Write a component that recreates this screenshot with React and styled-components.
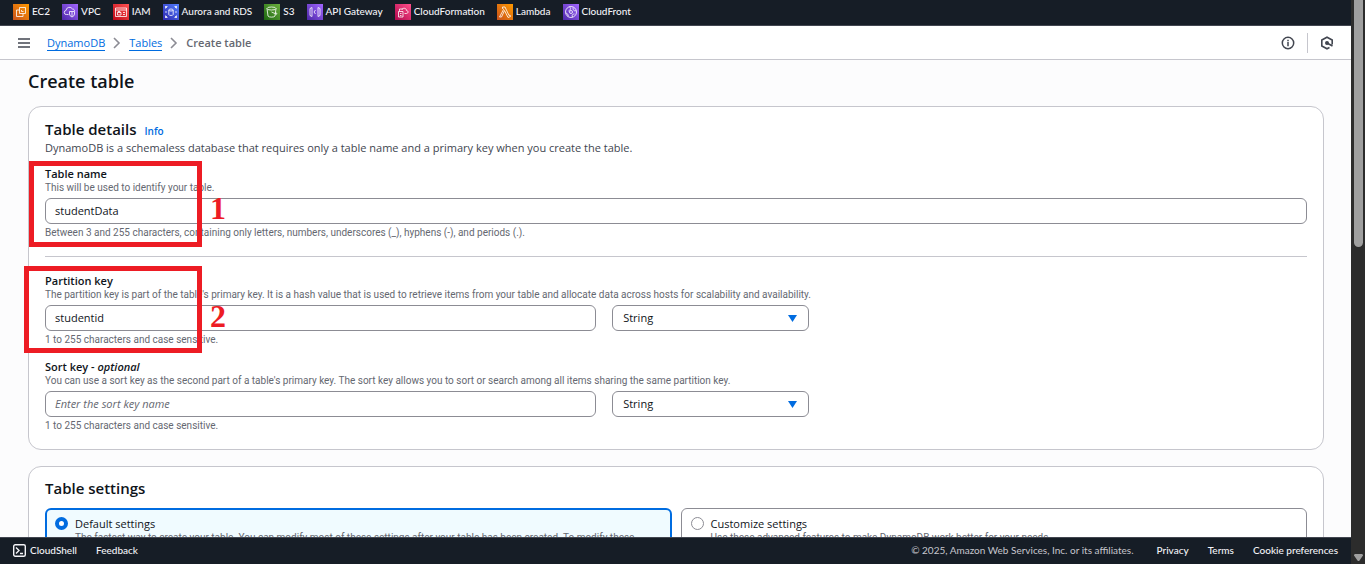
import React, { useState } from "react";
import styled, { createGlobalStyle, css } from "styled-components";

const Global = createGlobalStyle`
  *, *::before, *::after { box-sizing: border-box; }
  html, body, #root { height: 100%; }
  body {
    margin: 0;
    color: #0f141a;
    background: #fcfcfd;
    font: 11px/16px "Open Sans", "Noto Sans", sans-serif;
    overflow: hidden;
  }
  h1, h2, p { margin: 0; }
  button, input, select { font: inherit; color: inherit; }
`;

const Window = styled.div`
  display: grid;
  grid-template-columns: minmax(0, 1fr) 14px;
  height: 100%;
`;

const Shell = styled.div`
  display: flex;
  flex-direction: column;
  min-height: 0;
  height: 100vh;
`;

const Favorites = styled.nav`
  flex: none;
  display: flex;
  align-items: flex-start;
  height: 26px;
  padding: 4px 13px 0;
  gap: 12px;
  background: #161d26;
  border-bottom: 1px solid #424650;
  overflow: hidden;
`;

const Service = styled.a`
  display: flex;
  align-items: flex-start;
  gap: 3px;
  color: #f3f3f7;
  font: 500 10px/14px Lato, sans-serif;
  white-space: nowrap;
  text-decoration: none;
`;

const Tile = styled.svg`
  flex: none;
  width: 16px;
  height: 16px;
  fill: none;
  stroke: #fff;
  stroke-width: 1;
  stroke-opacity: 0.8;
  background: linear-gradient(45deg, ${(p) => p.$from}, ${(p) => p.$to});
`;

const NavBar = styled.header`
  flex: none;
  display: flex;
  align-items: center;
  height: 34px;
  padding: 0 16px;
  background: #fff;
  border-bottom: 1px solid #c6c6cd;
`;

const IconButton = styled.button`
  display: grid;
  place-items: center;
  width: 16px;
  height: 24px;
  padding: 0;
  border: 0;
  background: none;
  color: #424650;
  cursor: pointer;
`;

const Crumbs = styled.ol`
  display: flex;
  align-items: center;
  flex: 1;
  gap: 8px;
  margin: 0;
  padding: 0 0 0 15px;
  list-style: none;
  font-size: 11px;
`;

const Crumb = styled.li`
  display: flex;
  align-items: center;
  gap: 8px;
  color: #656871;
  font-weight: ${(p) => (p.$current ? 600 : 400)};
`;

const CrumbLink = styled.a`
  color: #006ce0;
  text-decoration: none;
  line-height: 15px;
  border-bottom: 1px solid #006ce0;
`;

const Tools = styled.div`
  display: flex;
  align-items: center;
  gap: 11px;
`;

const ToolDivider = styled.span`
  width: 1px;
  height: 20px;
  background: #c6c6cd;
`;

const Main = styled.main`
  flex: 1;
  min-height: 0;
  overflow: hidden;
  display: flex;
  flex-direction: column;
  gap: 16px;
  padding: 9px 27px 0 28px;
`;

const PageTitle = styled.h1`
  font-size: 18px;
  line-height: 24px;
  font-weight: 600;
  margin-bottom: -3px;
`;

const Card = styled.section`
  position: relative;
  flex: none;
  padding: 12px 16px 16px;
  background: #fff;
  border: 1px solid #c6c6cd;
  border-radius: 13px;
`;

const CardHead = styled.div`
  display: flex;
  align-items: baseline;
  gap: 8px;
`;

const CardTitle = styled.h2`
  font-size: 15px;
  line-height: 20px;
  font-weight: 600;
`;

const InfoLink = styled.a`
  color: #006ce0;
  font-size: 10px;
  font-weight: 600;
  text-decoration: none;
`;

const Description = styled.p`
  color: #424650;
  font-size: 11px;
  line-height: 18px;
`;

const Field = styled.div`
  margin-top: ${(p) => p.$space}px;
`;

const Label = styled.label`
  display: block;
  font-size: 11px;
  line-height: 14px;
  font-weight: 600;
`;

const Hint = styled.p`
  color: #656871;
  font: 400 10px/14px Roboto, sans-serif;
`;

const Controls = styled.div`
  display: grid;
  grid-template-columns: ${(p) => (p.$pair ? "minmax(0, 14fr) minmax(0, 5fr)" : "minmax(0, 1fr)")};
  gap: 16px;
  max-width: ${(p) => (p.$pair ? "764px" : "none")};
  margin: 3px 0 2px;
`;

const control = css`
  width: 100%;
  height: 26px;
  padding: 0 9px;
  border: 1px solid #8c8c94;
  border-radius: 6px;
  background: #fff;
  font-size: 11px;
`;

const TextInput = styled.input`
  ${control}
  padding-bottom: 2px;
  &::placeholder {
    color: #656871;
    font-style: italic;
    opacity: 1;
  }
`;

const SelectBox = styled.div`
  display: grid;
  align-items: center;
  & > * { grid-area: 1 / 1; }
`;

const Select = styled.select`
  ${control}
  padding: 0 10px;
  appearance: none;
`;

const Caret = styled.svg`
  justify-self: end;
  width: 9px;
  height: 7px;
  margin-right: 12px;
  fill: #006ce0;
  pointer-events: none;
`;

const Rule = styled.hr`
  height: 1px;
  margin: 16px 0 0;
  border: 0;
  background: #c6c6cd;
`;

const Choices = styled.div`
  display: grid;
  grid-template-columns: 1fr 1fr;
  gap: 9px;
  margin-top: 10px;
`;

const Choice = styled.label`
  display: grid;
  grid-template-columns: 13px 1fr;
  column-gap: 7px;
  align-items: start;
  min-height: 72px;
  padding: ${(p) => (p.$selected ? "7px 8px" : "8px 9px")};
  border: ${(p) => (p.$selected ? "2px solid #006ce0" : "1px solid #8c8c94")};
  border-radius: 6px;
  background: ${(p) => (p.$selected ? "#f0fbff" : "#fff")};
`;

const Radio = styled.input`
  appearance: none;
  width: 13px;
  height: 13px;
  margin: 0;
  border: 1px solid #8c8c94;
  border-radius: 50%;
  background: #fff;
  &:checked { border: 4px solid #006ce0; }
`;

const ChoiceText = styled.span`
  font-size: 11px;
  line-height: 14px;
`;

const ChoiceNote = styled.span`
  display: block;
  color: #656871;
  font: 400 10px/14px Roboto, sans-serif;
`;

const SettingsCard = styled(Card)`
  padding-top: 11px;
`;

const Footer = styled.footer`
  flex: none;
  display: flex;
  align-items: center;
  height: 27px;
  padding: 0 13px 2px;
  gap: 19px;
  background: #161d26;
  border-top: 1px solid #424650;
  color: #c6c6cd;
  font: 400 10px/14px Lato, sans-serif;
  white-space: nowrap;
`;

const FooterButton = styled.button`
  display: flex;
  align-items: center;
  gap: 4px;
  padding: 0;
  border: 0;
  background: none;
  color: #f3f3f7;
  font-weight: 500;
`;

const FooterLink = styled.a`
  color: #f3f3f7;
  font-weight: 500;
  text-decoration: none;
`;

const Copyright = styled.span`
  margin-left: auto;
  margin-right: 4px;
`;

const ScrollTrack = styled.div`
  display: flex;
  flex-direction: column;
  justify-content: space-between;
  align-items: center;
  height: 100vh;
  padding-bottom: 3px;
  background: #2c2c2c;
`;

const ScrollThumb = styled.div`
  width: 9px;
  height: 44%;
  border-radius: 0 0 5px 5px;
  background: #9f9f9f;
`;

const Mark = styled.div`
  position: absolute;
  top: ${(p) => p.$top}px;
  left: ${(p) => p.$left}px;
  width: ${(p) => p.$width}px;
  height: ${(p) => p.$height}px;
  border: 5px solid #ed1c24;
  pointer-events: none;
`;

const MarkNumber = styled.span`
  position: absolute;
  bottom: ${(p) => p.$bottom}px;
  left: 100%;
  margin-left: 13px;
  color: #ed1c24;
  font: 700 32px/36px "Liberation Serif", serif;
`;

const services = [
  ["EC2", "#c8511b", "#f90", <><path d="M6.500 3.500h6v6h-6z" /><path d="M6.500 6h-3v6.500h6.500v-3M8.500 6v1.500h2" /></>],
  ["VPC", "#4d27a8", "#a166ff", <><path d="M6.500 10.500H4.500a2 2 0 0 1-.5-4 3.500 3.500 0 0 1 6.500-1.500c1.500 0 2 1 2 2M7.500 7.500h5v2.500q0 2-2.500 3-2.500-1-2.500-3zM10 8v4.500" /></>],
  ["IAM", "#bd0816", "#ff5252", <><path d="M2.500 4h11v8.500h-11zM2.500 6h11M4.500 8.500h3.500v2.500H4.500zM5 8.500v-1h2v1M10 8.500h2M10 10.500h2" /></>],
  ["Aurora and RDS", "#2e27ad", "#527fff", <><ellipse cx="8" cy="6" rx="2.200" ry="1" /><path d="M5.800 6v4.500c0 1.300 4.400 1.300 4.400 0V6M2.500 4.500v-2h2M2.500 2.500l1.500 1.500M11.500 2.500h2v2M13.500 2.500 12 4M2.500 11.500v2h2M2.500 13.500 4 12M11.500 13.500h2v-2M13.500 13.500 12 12M3 7v2M13 7v2" /></>],
  ["S3", "#1b660f", "#6cae3e", <><ellipse cx="7.500" cy="4.500" rx="4.500" ry="1.500" /><path d="m3 4.500 1 7.500c.5 1.500 6.500 1.500 7 0l1-7.500M7.500 8l4.500 2c1.500.5 1.500-.5-.5-1.500" /></>],
  ["API Gateway", "#4d27a8", "#a166ff", <><path d="M5 3.500 3 4.500v7l2 1zM11 3.500l2 1v7l-2 1zM8.500 6 7 8l1.500 2" /></>],
  ["CloudFormation", "#b0084d", "#ff4f8b", <><path d="M3.500 7.500H8v5.500H3.500zM5 9.500h1.500M5 11.500h1.500M4.500 7V5H8M9.500 9.500h2c2 0 2-3 0-3 0-2.500-3.500-3-4.500-1" /></>],
  ["Lambda", "#c8511b", "#f90", <><path d="M5.500 3H8l4 8.500 1-.5.500 1.500-2.500 1L7.500 6.500 4.500 13h-2l4-7.500-.5-1H5.500z" /></>],
  ["CloudFront", "#4d27a8", "#a166ff", <><circle cx="8" cy="8" r="5.500" /><path d="M5 12.500c1-2-1-3-2-3.500M6.500 3c2 1 1 3-1 4M9.500 13c-1-2 0-3 2-3M13 6.500c-2 1-3-.5-3-3" /><circle cx="8" cy="8" r="1.500" /></>],
];

const Chevron = () => (
  <svg width="8" height="12" viewBox="0 0 8 12" fill="none" stroke="#8c8c94" strokeWidth="1.600" aria-hidden="true">
    <path d="m1 1 5 5-5 5" />
  </svg>
);

function TypeSelect({ label }) {
  return (
    <SelectBox>
      <Select aria-label={label} defaultValue="String">
        <option>String</option>
        <option>Number</option>
        <option>Binary</option>
      </Select>
      <Caret viewBox="0 0 9 7" aria-hidden="true"><path d="M0 0h9L4.500 7z" /></Caret>
    </SelectBox>
  );
}

function FormField({ id, label, optional, hint, constraint, space, value, placeholder, type }) {
  return (
    <Field $space={space}>
      <Label htmlFor={id}>{label}{optional && <> - <em>optional</em></>}</Label>
      <Hint>{hint}</Hint>
      <Controls $pair={Boolean(type)}>
        <TextInput id={id} defaultValue={value} placeholder={placeholder} />
        {type && <TypeSelect label={type} />}
      </Controls>
      <Hint>{constraint}</Hint>
    </Field>
  );
}

export default function App() {
  const [mode, setMode] = useState("default");
  const choices = [
    ["default", "Default settings", "The fastest way to create your table. You can modify most of these settings after your table has been created. To modify these"],
    ["custom", "Customize settings", "Use these advanced features to make DynamoDB work better for your needs."],
  ];
  return (
    <>
      <Global />
      <Window>
        <Shell>
          <Favorites aria-label="Favorite services">
            {services.map(([name, from, to, art]) => (
              <Service href="#" key={name}>
                <Tile $from={from} $to={to} viewBox="0 0 16 16" aria-hidden="true">{art}</Tile>
                {name}
              </Service>
            ))}
          </Favorites>
          <NavBar>
            <IconButton aria-label="Open navigation">
              <svg width="12" height="10" viewBox="0 0 12 10" stroke="currentColor" strokeWidth="1.600"><path d="M0 1h12M0 5h12M0 9h12" /></svg>
            </IconButton>
            <Crumbs>
              <Crumb><CrumbLink href="#">DynamoDB</CrumbLink><Chevron /></Crumb>
              <Crumb><CrumbLink href="#">Tables</CrumbLink><Chevron /></Crumb>
              <Crumb $current aria-current="page">Create table</Crumb>
            </Crumbs>
            <Tools>
              <IconButton aria-label="Help panel">
                <svg width="14" height="14" viewBox="0 0 14 14" fill="none" stroke="currentColor" strokeWidth="1.500"><circle cx="7" cy="7" r="5.700" /><path d="M7 6v4.200M7 3.700v1.500" /></svg>
              </IconButton>
              <ToolDivider />
              <IconButton aria-label="Amazon Q">
                <svg width="14" height="14" viewBox="0 0 14 14" fill="none" stroke="currentColor" strokeWidth="1.600"><path d="M12.200 8.500V4L7 1.200 1.800 4v6L7 12.800l2.500-1.300M7 7l5.500 3" /><circle cx="7" cy="7" r="1.200" fill="currentColor" /></svg>
              </IconButton>
            </Tools>
          </NavBar>
          <Main>
            <PageTitle>Create table</PageTitle>
            <Card>
              <CardHead>
                <CardTitle>Table details</CardTitle>
                <InfoLink href="#">Info</InfoLink>
              </CardHead>
              <Description>DynamoDB is a schemaless database that requires only a table name and a primary key when you create the table.</Description>
              <FormField id="table-name" space={10} label="Table name" hint="This will be used to identify your table." value="studentData"
                constraint="Between 3 and 255 characters, containing only letters, numbers, underscores (_), hyphens (-), and periods (.)." />
              <Rule />
              <FormField id="partition-key" space={17} label="Partition key" value="studentid" type="Partition key type"
                hint="The partition key is part of the table's primary key. It is a hash value that is used to retrieve items from your table and allocate data across hosts for scalability and availability."
                constraint="1 to 255 characters and case sensitive." />
              <FormField id="sort-key" space={13} label="Sort key" optional placeholder="Enter the sort key name" type="Sort key type"
                hint="You can use a sort key as the second part of a table's primary key. The sort key allows you to sort or search among all items sharing the same partition key."
                constraint="1 to 255 characters and case sensitive." />
              <Mark $top={54} $left={0} $width={173} $height={86}><MarkNumber $bottom={16}>1</MarkNumber></Mark>
              <Mark $top={159} $left={-5} $width={178} $height={87}><MarkNumber $bottom={14}>2</MarkNumber></Mark>
            </Card>
            <SettingsCard>
              <CardTitle>Table settings</CardTitle>
              <Choices>
                {choices.map(([id, title, note]) => (
                  <Choice key={id} $selected={mode === id}>
                    <Radio type="radio" name="settings" checked={mode === id} onChange={() => setMode(id)} />
                    <ChoiceText>{title}<ChoiceNote>{note}</ChoiceNote></ChoiceText>
                  </Choice>
                ))}
              </Choices>
            </SettingsCard>
          </Main>
          <Footer>
            <FooterButton>
              <svg width="13" height="13" viewBox="0 0 13 13" fill="none" stroke="currentColor" strokeWidth="1.400" aria-hidden="true"><rect x=".7" y=".7" width="11.600" height="11.600" rx="1.500" /><path d="m3 3.500 3 3-3 3M7 9.500h3" /></svg>
              CloudShell
            </FooterButton>
            <FooterButton>Feedback</FooterButton>
            <Copyright>© 2025, Amazon Web Services, Inc. or its affiliates.</Copyright>
            <FooterLink href="#">Privacy</FooterLink>
            <FooterLink href="#">Terms</FooterLink>
            <FooterLink href="#">Cookie preferences</FooterLink>
          </Footer>
        </Shell>
        <ScrollTrack aria-hidden="true">
          <ScrollThumb />
          <svg width="9" height="7" viewBox="0 0 9 7" fill="#9f9f9f"><path d="M1 0h7q1 0 1 1.500L5.500 6.500q-1 1-2 0L0 1.500Q0 0 1 0z" /></svg>
        </ScrollTrack>
      </Window>
    </>
  );
}
